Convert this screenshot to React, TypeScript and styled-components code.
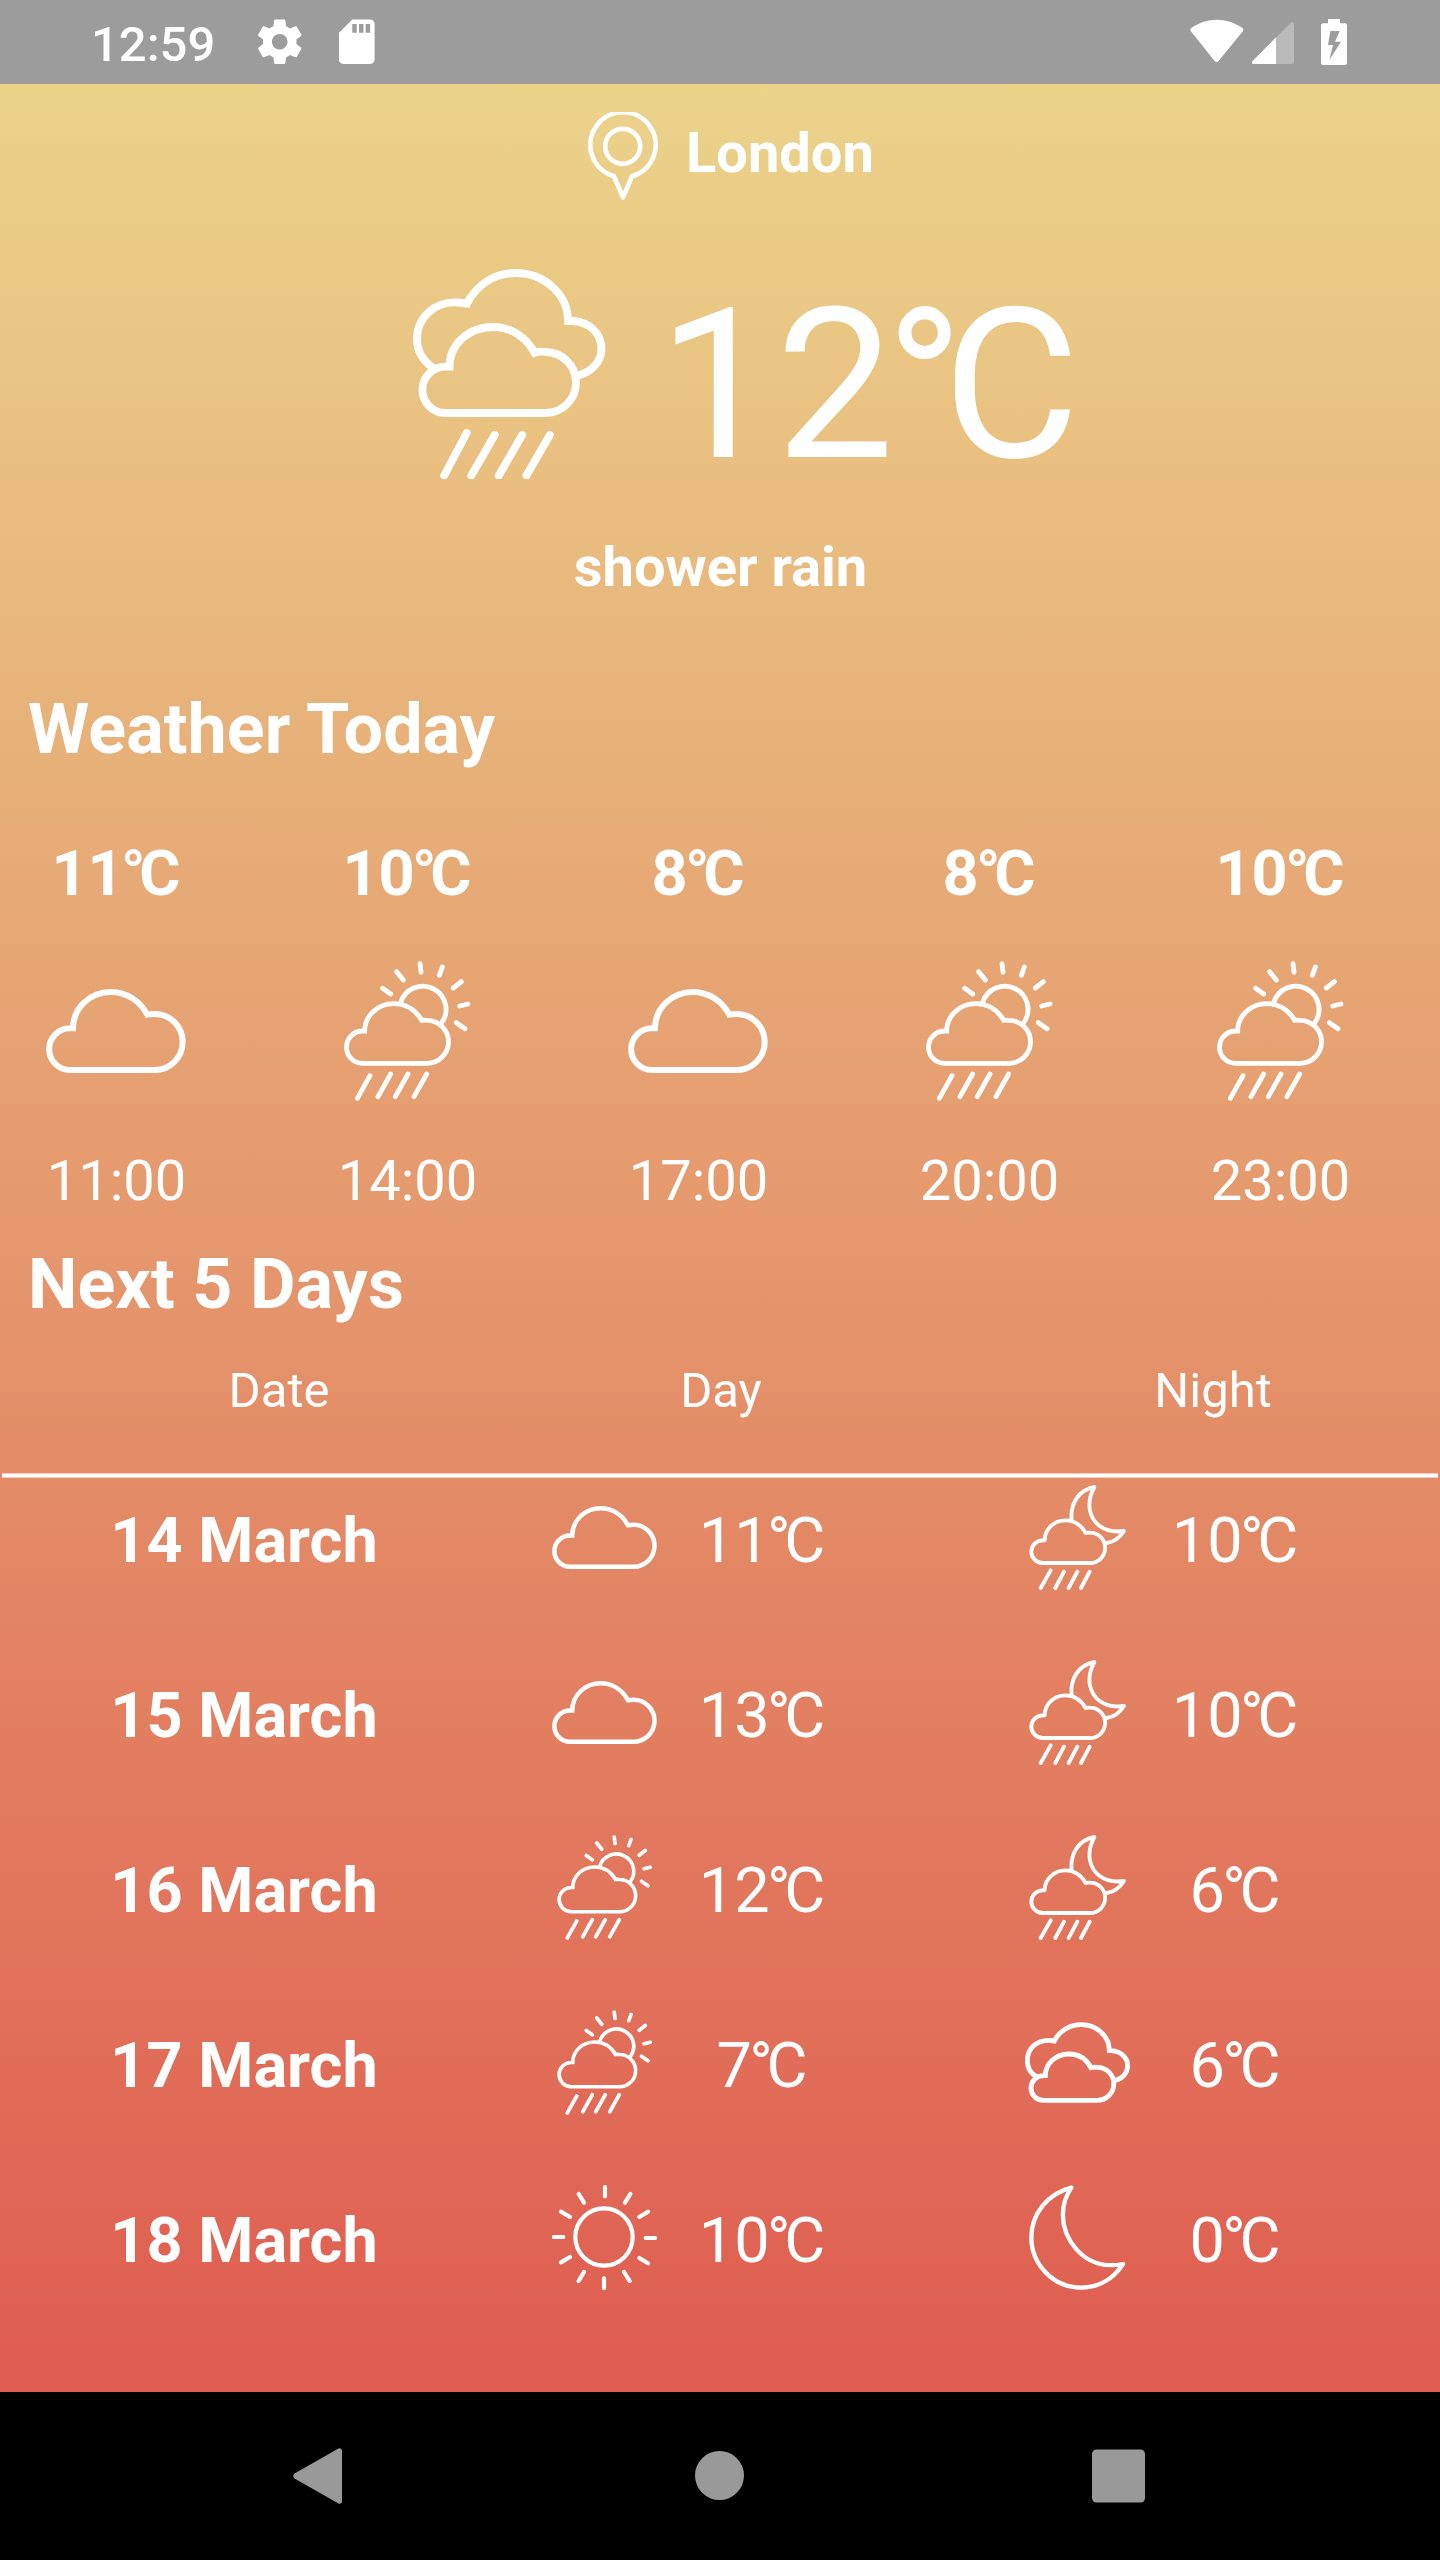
import React from "react";
import styled, { createGlobalStyle } from "styled-components";

const GlobalStyle = createGlobalStyle`
  *, *::before, *::after { box-sizing: border-box; }
  body { margin: 0; background: #000; }
`;

const Screen = styled.div`
  width: 1440px;
  height: 2560px;
  display: flex;
  flex-direction: column;
  overflow: hidden;
  color: #fff;
  font-family: Roboto, "Noto Sans", sans-serif;
`;

/* ---------- system bars ---------- */

const StatusBar = styled.header`
  height: 84px;
  flex: none;
  display: flex;
  align-items: center;
  justify-content: space-between;
  padding: 0 93px 0 91px;
  background: #9c9c9c;
`;

const StatusGroup = styled.div`
  display: flex;
  align-items: center;
`;

const Clock = styled.span`
  width: 161.5px;
  padding-top: 5px;
  font-size: 49px;
  line-height: 58px;
  font-weight: 500;
`;

const StatusIcon = styled.svg<{ $w: number; $h: number; $gap?: number }>`
  display: block;
  width: ${(p) => p.$w}px;
  height: ${(p) => p.$h}px;
  margin-left: ${(p) => p.$gap ?? 0}px;
  fill: #fff;
`;

const NavBar = styled.nav`
  height: 168px;
  flex: none;
  display: flex;
  align-items: center;
  justify-content: space-between;
  padding: 0 295px 0 293px;
  background: #000;
`;

const NavIcon = styled.svg`
  display: block;
  width: 53px;
  height: 56px;
  fill: #999;
`;

/* ---------- content ---------- */

const Content = styled.main`
  flex: 1;
  display: flex;
  flex-direction: column;
  background: linear-gradient(180deg, #ebd38a 0%, #df5c50 100%);
`;

const CityRow = styled.div`
  height: 88px;
  margin-top: 28px;
  padding-left: 588px;
  display: flex;
  align-items: center;
  gap: 28px;
`;

const PinSvg = styled.svg`
  width: 70px;
  height: 88px;
  fill: none;
  stroke: #fff;
  stroke-width: 14;
`;

const CityName = styled.h1`
  margin: 0;
  padding-bottom: 6px;
  font-size: 56px;
  line-height: 66px;
  font-weight: 700;
`;

const CurrentRow = styled.div`
  height: 210px;
  margin-top: 69px;
  padding-left: 404px;
  display: flex;
  align-items: center;
  gap: 44px;
`;

const CurrentTemp = styled.div`
  padding-top: 22px;
  font-size: 210px;
  line-height: 246px;
  white-space: nowrap;
`;

/* The degree ring tucks in tightly between the last digit and the C. */
const Tight = styled.span<{ $by: number }>`
  letter-spacing: ${(p) => -p.$by}em;
`;

const Description = styled.p`
  margin: 55px 0 0;
  padding-left: 1px;
  text-align: center;
  font-size: 56px;
  line-height: 66px;
  font-weight: 700;
`;

const SectionTitle = styled.h2<{ $top: number }>`
  margin: ${(p) => p.$top}px 0 0 28px;
  font-size: 70px;
  line-height: 82px;
  font-weight: 700;
  letter-spacing: 0.08px;
`;

const HourList = styled.div`
  display: flex;
  gap: 151px;
  margin-top: 66px;
  padding-left: 46px;
`;

const Hour = styled.div`
  width: 140px;
  flex: none;
  display: flex;
  flex-direction: column;
  align-items: center;
  white-space: nowrap;
`;

const HourTemp = styled.div`
  margin-bottom: 50px;
  font-size: 63px;
  line-height: 75px;
  font-weight: 700;
`;

const HourTime = styled.div`
  margin-top: 47px;
  padding-left: 1px;
  font-size: 56px;
  line-height: 66px;
`;

const TableHead = styled.div`
  display: flex;
  margin-top: 36px;
  padding-top: 1px;
  font-size: 49px;
  line-height: 58px;
  text-align: center;
`;

const HeadCell = styled.div<{ $w: number }>`
  width: ${(p) => p.$w}px;
  padding-right: 2px;
  &:last-child { margin-left: auto; }
`;

const Rule = styled.div`
  height: 5px;
  margin: 53px 2px 7px;
  background: #fff;
  border: solid #f4cdbf;
  border-width: 1px 0;
`;

const DayList = styled.div`
  display: flex;
  flex-direction: column;
  gap: 70px;
`;

const DayRow = styled.div`
  height: 105px;
  display: grid;
  grid-template-columns: 552px 473px 1fr;
  align-items: center;
  font-size: 63px;
  line-height: 74px;
`;

const DateCell = styled.div`
  width: 488px;
  padding-top: 6px;
  text-align: center;
  font-weight: 700;
`;

const ForecastCell = styled.div`
  display: flex;
  align-items: center;
`;

const ForecastTemp = styled.div`
  width: 210px;
  padding-top: 6px;
  text-align: center;
`;

/* ---------- weather drawings ---------- */

const Glyph = styled.svg<{ $size: number }>`
  display: block;
  flex: none;
  width: ${(p) => p.$size}px;
  height: ${(p) => p.$size}px;
  fill: none;
  stroke: #fff;
  stroke-linecap: round;
`;

type Kind = "cloud" | "sunRain" | "moonRain" | "clouds" | "sun" | "moon" | "shower";

const drawings: Record<Kind, { box: string; stroke: number; parts: string[] }> = {
  cloud: {
    box: "84 93 420 420",
    stroke: 18,
    parts: [
      "M156 420H410A84 84 0 0 0 410 252Q398 252 388 254C365 212 325 186 279 186C215 186 165 235 165 295H156A62.5 62.5 0 0 0 156 420Z",
    ],
  },
  sunRain: {
    box: "957 93 420 420",
    stroke: 14.5,
    parts: [
      "M1034 400H1227A64.5 64.5 0 0 0 1227 271Q1218 270 1211 271C1193 240 1163 221 1128 221C1078 221 1040 258 1040 303H1034A48.5 48.5 0 0 0 1034 400Z",
      "M1148 218A69.5 69.5 0 1 1 1270 280",
      "M1094 175L1118 192M1136 125L1156 150M1206 101L1209 127M1273 111L1264 136M1330 155L1306 174M1350 222L1325 228M1315 278L1341 296",
      "M1056 437L1018 505M1118 432L1080 500M1170 432L1132 500M1226 432L1188 500",
    ],
  },
  moonRain: {
    box: "195 435 315 315",
    stroke: 11.5,
    parts: [
      "M248 669H390A45.5 45.5 0 0 0 390 578Q382 577 377 579C363 555 342 541 317 541C282 541 254 568 254 601H248A34 34 0 0 0 248 669Z",
      "M335 541C330 492 355 450 403 441C376 492 389 535 419 558C440 573 465 577 492 573C480 592 462 606 440 609",
      "M272 691L242 744M312 695L286 744M352 695L326 744M389 695L363 744",
    ],
  },
  clouds: {
    box: "135 630 315 315",
    stroke: 14.5,
    parts: [
      "M170 830C150 820 142 800 142 781C142 745 170 720 208 721L223 723C238 692 270 674 304 674C350 674 388 708 388 752H394C425 754 443 775 443 797C443 818 428 836 406 841",
      "M190 901H352A49.5 49.5 0 0 0 352 802Q342 801 333 803C319 777 295 762 267 762C227 762 196 791 196 827H190A37 37 0 0 0 190 901Z",
    ],
  },
  sun: {
    box: "96 1155 315 315",
    stroke: 12.5,
    parts: [
      "M166 1311A86 86 0 1 1 338 1311A86 86 0 1 1 166 1311Z",
      "M255 1161V1189M331 1182L315 1208M384 1235L358 1251M377 1314H405M358 1374L384 1390M312 1416L329 1443M252 1435V1464M192 1416L176 1443M150 1371L123 1387M130 1311H101M150 1251L123 1235M176 1182L192 1208",
    ],
  },
  moon: {
    box: "135 1155 315 315",
    stroke: 13,
    parts: [
      "M274 1163C205 1180 154 1240 154 1312C154 1395 222 1463 303 1463C355 1463 400 1437 429 1392C375 1403 325 1388 290 1349C262 1317 247 1280 249 1240C249 1213 258 1187 274 1163Z",
    ],
  },
  shower: {
    box: "404 269 210 210",
    stroke: 7.8,
    parts: [
      "M433 368C422 360 417 349 417 339C417 318 434 301 458 302.500L467 303.500C477 284 495 273 515.500 273C545 273 568 295 568 321H573C590 322 601.500 334 601.500 349C601.500 361 592 372 578 375.500",
      "M445.500 413H545.500A30.500 30.500 0 0 0 545.500 352Q540 351 534.600 352.700C526 337 511 327 493.500 327C468 327 449.500 345 449.500 366.700H445.500A23.150 23.150 0 0 0 445.500 413Z",
      "M466.700 433L444.200 475.500M494.700 435L471.300 475.500M522.200 435L498.800 475.500M549.800 435L526.400 475.500",
    ],
  },
};

function Weather({ kind, size }: { kind: Kind; size: number }) {
  const { box, stroke, parts } = drawings[kind];
  return (
    <Glyph $size={size} viewBox={box} strokeWidth={stroke} strokeLinejoin={kind === "moon" || kind === "moonRain" ? "round" : "miter"}>
      {parts.map((d) => (
        <path key={d} d={d} />
      ))}
    </Glyph>
  );
}

const hours: { temp: number; kind: Kind; time: string }[] = [
  { temp: 11, kind: "cloud", time: "11:00" },
  { temp: 10, kind: "sunRain", time: "14:00" },
  { temp: 8, kind: "cloud", time: "17:00" },
  { temp: 8, kind: "sunRain", time: "20:00" },
  { temp: 10, kind: "sunRain", time: "23:00" },
];

const days: { date: string; day: [Kind, number]; night: [Kind, number] }[] = [
  { date: "14 March", day: ["cloud", 11], night: ["moonRain", 10] },
  { date: "15 March", day: ["cloud", 13], night: ["moonRain", 10] },
  { date: "16 March", day: ["sunRain", 12], night: ["moonRain", 6] },
  { date: "17 March", day: ["sunRain", 7], night: ["clouds", 6] },
  { date: "18 March", day: ["sun", 10], night: ["moon", 0] },
];

function Celsius({ value }: { value: number }) {
  const digits = String(value);
  return (
    <>
      {digits.slice(0, -1)}
      <Tight $by={0.042}>{digits.slice(-1)}</Tight>
      <Tight $by={0.1}>°</Tight>C
    </>
  );
}

function Forecast({ value }: { value: [Kind, number] }) {
  return (
    <ForecastCell>
      <Weather kind={value[0]} size={105} />
      <ForecastTemp>
        <Celsius value={value[1]} />
      </ForecastTemp>
    </ForecastCell>
  );
}

export default function App() {
  return (
    <Screen>
      <GlobalStyle />
      <StatusBar>
        <StatusGroup>
          <Clock>12:59</Clock>
          <StatusIcon $w={53.5} $h={53.5} viewBox="0 0 24 24">
            <path d="M19.43 12.98c.04-.32.07-.64.07-.98s-.03-.66-.07-.98l2.110-1.650c.19-.15.24-.42.12-.64l-2-3.460c-.12-.22-.39-.3-.61-.22l-2.490 1c-.52-.4-1.080-.73-1.690-.98l-.38-2.650C14.460 2.180 14.250 2 14 2h-4c-.25 0-.46.18-.49.42l-.38 2.650c-.61.25-1.170.59-1.690.98l-2.490-1c-.23-.09-.49 0-.61.22l-2 3.460c-.13.22-.07.49.12.64l2.110 1.650c-.04.32-.07.65-.07.98s.03.66.07.98l-2.110 1.650c-.19.15-.24.42-.12.64l2 3.460c.12.22.39.3.61.22l2.490-1c.52.4 1.080.73 1.690.98l.38 2.650c.03.24.24.42.49.42h4c.25 0 .46-.18.49-.42l.38-2.650c.61-.25 1.170-.59 1.690-.98l2.490 1c.23.09.49 0 .61-.22l2-3.460c.12-.22.07-.49-.12-.64l-2.110-1.650zM12 15.500c-1.930 0-3.500-1.570-3.500-3.500s1.570-3.500 3.500-3.500 3.500 1.570 3.500 3.500-1.570 3.500-3.500 3.500z" />
          </StatusIcon>
          <StatusIcon $w={53.5} $h={53.5} $gap={23.5} viewBox="0 0 24 24">
            <path d="M18 2h-8L4.020 8 4 20c0 1.100.9 2 2 2h12c1.100 0 2-.9 2-2V4c0-1.100-.9-2-2-2zm-6 6h-2V4h2v4zm3 0h-2V4h2v4zm3 0h-2V4h2v4z" />
          </StatusIcon>
        </StatusGroup>
        <StatusGroup>
          <StatusIcon $w={54} $h={46} viewBox="89 57 162 138">
            <path d="M93 84C140 51 199 51 246 84Q251 88 248 93L175 183Q169 189 163 183L91 93Q88 88 93 84Z" />
          </StatusIcon>
          <StatusIcon $w={42} $h={46} $gap={8.5} viewBox="276 57 126 138">
            <path d="M277 184L392 68Q396 65 399 67Q402 68 402 72V187Q402 192 397 192H280Q274 190 277 184Z" opacity=".3" />
            <path d="M277 184L348 112V192H280Q274 190 277 184Z" />
          </StatusIcon>
          <StatusIcon $w={26} $h={46} $gap={27} viewBox="483 57 78 138">
            <path
              fillRule="evenodd"
              d="M504 57H540V70H555Q561 70 561 76V189Q561 195 555 195H489Q483 195 483 189V76Q483 70 489 70H504ZM511 93L504 135H519L508 180L543 125H525L539 93Z"
            />
          </StatusIcon>
        </StatusGroup>
      </StatusBar>

      <Content>
        <CityRow>
          <PinSvg viewBox="84 66 210 264">
            <path d="M162 259L189 322L216 259A98 98 0 1 0 162 259Z" strokeLinejoin="round" />
            <circle cx="188" cy="169" r="52.500" />
          </PinSvg>
          <CityName>London</CityName>
        </CityRow>
        <CurrentRow>
          <Weather kind="shower" size={210} />
          <CurrentTemp>
            <Celsius value={12} />
          </CurrentTemp>
        </CurrentRow>
        <Description>shower rain</Description>

        <SectionTitle $top={88}>Weather Today</SectionTitle>
        <HourList>
          {hours.map((h) => (
            <Hour key={h.time}>
              <HourTemp>
                <Celsius value={h.temp} />
              </HourTemp>
              <Weather kind={h.kind} size={140} />
              <HourTime>{h.time}</HourTime>
            </Hour>
          ))}
        </HourList>

        <SectionTitle $top={29}>Next 5 Days</SectionTitle>
        <TableHead>
          <HeadCell $w={560}>Date</HeadCell>
          <HeadCell $w={324}>Day</HeadCell>
          <HeadCell $w={452}>Night</HeadCell>
        </TableHead>
        <Rule />
        <DayList>
          {days.map((d) => (
            <DayRow key={d.date}>
              <DateCell>{d.date}</DateCell>
              <Forecast value={d.day} />
              <Forecast value={d.night} />
            </DayRow>
          ))}
        </DayList>
      </Content>

      <NavBar>
        <NavIcon viewBox="0 0 53 56">
          <path d="M1.500 25.500L45 .8Q49 -1 49 3V53Q49 57 45 55.200L1.500 30.500Q-1 28 1.500 25.500Z" />
        </NavIcon>
        <NavIcon viewBox="0 0 53 56">
          <circle cx="26.500" cy="27.500" r="24.500" />
        </NavIcon>
        <NavIcon viewBox="0 0 53 56">
          <rect x="0" y="1.500" width="53" height="53" rx="4.500" />
        </NavIcon>
      </NavBar>
    </Screen>
  );
}
